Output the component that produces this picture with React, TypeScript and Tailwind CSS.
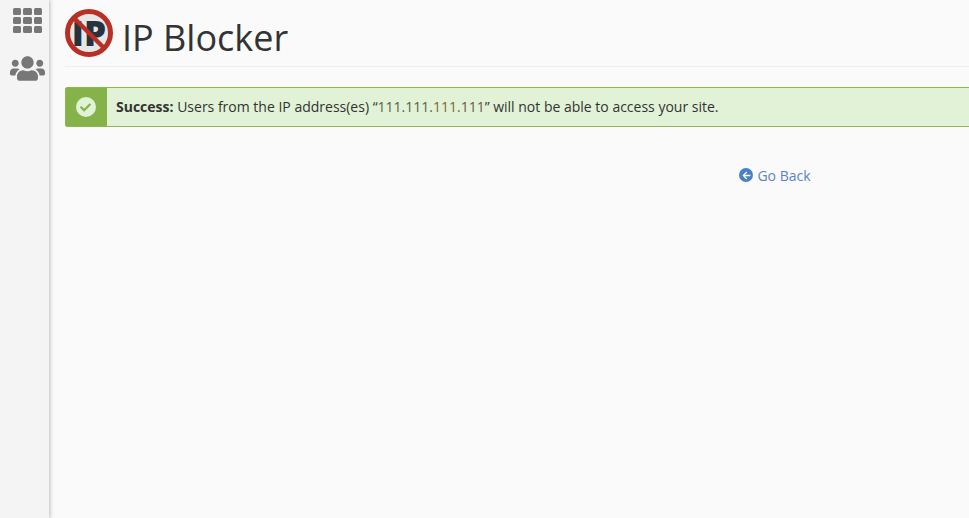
import React from 'react';
import { FaUsers, FaCheck, FaArrowLeft } from 'react-icons/fa';

const AppsIcon = () => (
  <div className="grid grid-cols-3 gap-[2px] w-[29px]">
    {Array.from({ length: 9 }).map((_, i) => (
      <div key={i} className="h-[7px] rounded-[1.5px] bg-[#777777]" />
    ))}
  </div>
);

const IpBlockerLogo = () => (
  <svg width="48" height="48" viewBox="0 0 48 48" className="shrink-0">
    <circle cx="24" cy="24" r="21.5" fill="#e6e6e6" stroke="#b92f25" strokeWidth="5" />
    <text x="24" y="37" textAnchor="middle" fontFamily="'Open Sans', sans-serif" fontWeight="800" fontSize="35" fill="#27323d">
      IP
    </text>
    <line x1="9" y1="9" x2="39" y2="39" stroke="#b92f25" strokeWidth="4.5" />
  </svg>
);

export default function App() {
  return (
    <div className="flex h-[518px] w-[969px] overflow-hidden bg-[#fafafa] font-['Open_Sans',sans-serif] text-[#333333]">
      {/* Side rail */}
      <div className="w-[49px] shrink-0 bg-[#f4f4f4] shadow-[1px_0_4px_rgba(0,0,0,0.25)] flex flex-col items-center pt-[8px] pl-[6px]">
        <AppsIcon />
        <FaUsers size={35} className="text-[#777777] mt-[18px] -ml-[1px]" />
      </div>

      <div className="flex-1 min-w-0 pl-[16px] pt-[9px]">
        {/* Title */}
        <div className="w-[1420px] h-[58px] border-b border-[#eeeeee] flex items-start gap-[9px]">
          <IpBlockerLogo />
          <h1 className="text-[36px] leading-[58px] font-normal text-[#333333]">IP Blocker</h1>
        </div>

        {/* Alert */}
        <div className="w-[1420px] mt-[20px] h-[40px] flex rounded-[2px] border border-[#8cb84f] bg-[#e1f2d6]">
          <div className="w-[41px] shrink-0 bg-[#85b34a] flex items-center justify-center pr-[2px]">
            <div className="w-[20px] h-[20px] rounded-full bg-[#e1f2d6] flex items-center justify-center">
              <FaCheck size={11} className="text-[#85b34a]" />
            </div>
          </div>
          <div className="pl-[9px] text-[14px] leading-[38px] whitespace-nowrap">
            <strong className="font-bold">Success:</strong> Users from the IP address(es) “<span className="text-[#55654a]">111.111.</span><span className="text-[#7d6a30]">111.</span><span className="text-[#6a5a48]">111</span>” will not be able to access your site.
          </div>
        </div>

        {/* Back link */}
        <div className="w-[1420px] mt-[39px] flex justify-center">
          <a className="flex items-center gap-[4px] text-[14px] leading-[20px] text-[#5b83c4]" href="#">
            <span className="w-[14px] h-[14px] rounded-full bg-[#4a80c8] flex items-center justify-center -mt-[2px]">
              <FaArrowLeft size={9} className="text-white" />
            </span>
            Go Back
          </a>
        </div>
      </div>
    </div>
  );
}
